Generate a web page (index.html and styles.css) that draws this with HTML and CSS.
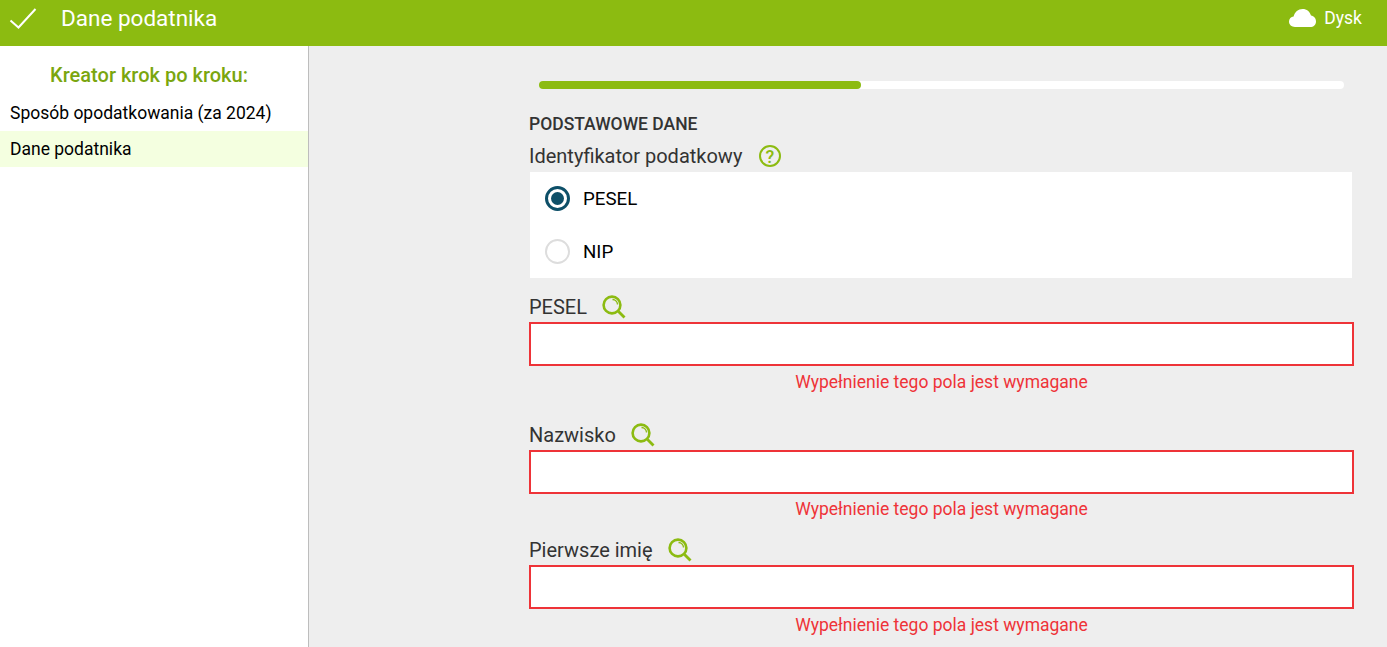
FILE: index.html
```html
<!DOCTYPE html>
<html lang="pl">
<head>
<meta charset="utf-8">
<title>Dane podatnika</title>
<link rel="stylesheet" href="styles.css">
</head>
<body>
<header class="topbar">
  <svg class="check" viewBox="0 0 28 21" width="28" height="21"><path d="M1.5 12.5 L9.5 19.5 L26.5 1" fill="none" stroke="#fff" stroke-width="2"/></svg>
  <h1 class="title">Dane podatnika</h1>
  <div class="drive">
    <svg class="cloud" viewBox="0 0 27 18" width="27" height="18"><path d="M6 18 C2.5 18 0 15.8 0 12.6 C0 9.8 2 7.8 4.6 7.5 C5.6 3 9.2 0 13.6 0 C17.8 0 21 2.6 22 6.6 C24.9 7 27 9.4 27 12.4 C27 15.8 24.6 18 21.2 18 Z" fill="#fff"/></svg>
    <span>Dysk</span>
  </div>
</header>
<div class="layout">
  <aside class="sidebar">
    <h2 class="side-title">Kreator krok po kroku:</h2>
    <ul class="steps">
      <li class="step">Sposób opodatkowania (za 2024)</li>
      <li class="step step-active">Dane podatnika</li>
    </ul>
  </aside>
  <main class="content">
    <form class="form">
      <div class="progress"><div class="progress-fill"></div></div>
      <h3 class="section">PODSTAWOWE DANE</h3>
      <div class="label label-id">
        <span>Identyfikator podatkowy</span>
        <svg class="icon-help" viewBox="0 0 24 24" width="24" height="24"><circle cx="12" cy="12" r="10" fill="none" stroke="#8cbb11" stroke-width="2"/><text x="12" y="18.5" text-anchor="middle" class="help-mark">?</text></svg>
      </div>
      <div class="radios">
        <div class="radio-row"><span class="radio radio-on"></span><span>PESEL</span></div>
        <div class="radio-row"><span class="radio"></span><span>NIP</span></div>
      </div>
      <div class="label label-search label-pesel">
        <span>PESEL</span>
        <svg class="icon-search" viewBox="0 0 24 24" width="24" height="24"><circle cx="10" cy="10" r="8.4" fill="none" stroke="#8cbb11" stroke-width="2.6"/><path d="M16.5 16.5 L22.5 22.5" stroke="#8cbb11" stroke-width="2.8" fill="none"/><path d="M10.5 4.5 A5.2 5.2 0 0 1 15.5 9.5" stroke="#8cbb11" stroke-width="1.3" fill="none"/></svg>
      </div>
      <div class="input"></div>
      <p class="error">Wypełnienie tego pola jest wymagane</p>
      <div class="label label-search label-name">
        <span>Nazwisko</span>
        <svg class="icon-search" viewBox="0 0 24 24" width="24" height="24"><circle cx="10" cy="10" r="8.4" fill="none" stroke="#8cbb11" stroke-width="2.6"/><path d="M16.5 16.5 L22.5 22.5" stroke="#8cbb11" stroke-width="2.8" fill="none"/><path d="M10.5 4.5 A5.2 5.2 0 0 1 15.5 9.5" stroke="#8cbb11" stroke-width="1.3" fill="none"/></svg>
      </div>
      <div class="input"></div>
      <p class="error error-tight">Wypełnienie tego pola jest wymagane</p>
      <div class="label label-search label-first">
        <span>Pierwsze imię</span>
        <svg class="icon-search" viewBox="0 0 24 24" width="24" height="24"><circle cx="10" cy="10" r="8.4" fill="none" stroke="#8cbb11" stroke-width="2.6"/><path d="M16.5 16.5 L22.5 22.5" stroke="#8cbb11" stroke-width="2.8" fill="none"/><path d="M10.5 4.5 A5.2 5.2 0 0 1 15.5 9.5" stroke="#8cbb11" stroke-width="1.3" fill="none"/></svg>
      </div>
      <div class="input"></div>
      <p class="error">Wypełnienie tego pola jest wymagane</p>
    </form>
  </main>
</div>
</body>
</html>
```
FILE: styles.css
```css
* { box-sizing: border-box; }
html, body { height: 100%; }
body {
  margin: 0;
  overflow: hidden;
  font-family: Roboto, "Liberation Sans", sans-serif;
  color: #333;
  display: flex;
  flex-direction: column;
}
.topbar {
  height: 46px;
  flex: none;
  background: #8cbb11;
  color: #fff;
  display: flex;
  align-items: flex-start;
  padding: 8px 25px 0 9px;
}
.check { flex: none; }
.title {
  margin: -5px 0 0 24px;
  font-size: 22.5px;
  font-weight: 400;
  line-height: 30px;
}
.drive {
  margin-left: auto;
  display: flex;
  align-items: center;
  gap: 8px;
  font-size: 17.5px;
  line-height: 20px;
}
.layout { flex: 1; display: flex; min-height: 0; }
.sidebar {
  width: 309px;
  flex: none;
  background: #fff;
  border-right: 1px solid #bdbdbd;
}
.side-title {
  margin: 17px 0 0;
  font-size: 20px;
  line-height: 24px;
  font-weight: 500;
  color: #7aa60f;
  text-align: center;
  padding-right: 10px;
}
.steps { list-style: none; margin: 8px 0 0; padding: 0; }
.step {
  height: 36px;
  line-height: 36px;
  padding-left: 10px;
  font-size: 17.5px;
  color: #000;
}
.step-active { background: #f4ffe0; }
.content {
  flex: 1;
  background: #eee;
  padding-left: 220px;
  overflow: hidden;
}
.form { width: 825px; }
.progress {
  margin: 35px 10px 0;
  height: 8px;
  border-radius: 4px;
  background: #fff;
}
.progress-fill {
  width: 40%;
  height: 100%;
  border-radius: 4px;
  background: #8cbb11;
}
.section {
  margin: 25px 0 0;
  font-size: 17.5px;
  line-height: 21px;
  font-weight: 500;
  color: #333;
}
.label {
  display: flex;
  align-items: center;
  gap: 16px;
  font-size: 20px;
  line-height: 28px;
  color: #333;
}
.label-id { margin-top: 7px; height: 27px; }
.label-search { height: 30px; gap: 15px; }
.label-pesel { margin-top: 14px; }
.label-name { margin-top: 26px; }
.label-first { margin-top: 14px; }
.help-mark {
  font-family: Roboto, sans-serif;
  font-size: 18px;
  font-weight: 500;
  fill: #8cbb11;
}
.radios {
  background: #fff;
  height: 106px;
  margin: 3px 0 0 1px;
  width: 822px;
}
.radio-row {
  height: 53px;
  display: flex;
  align-items: center;
  gap: 13px;
  padding-left: 15px;
  font-size: 18.7px;
  color: #000;
}
.radio {
  width: 25px;
  height: 25px;
  border-radius: 50%;
  border: 2px solid #ddd;
  background: #fff;
  display: flex;
  align-items: center;
  justify-content: center;
}
.radio-on { border: 3px solid #0d4f68; }
.radio-on::after {
  content: "";
  width: 13px;
  height: 13px;
  border-radius: 50%;
  background: #0d4f68;
}
.input {
  height: 44px;
  background: #fff;
  border: 2px solid #ee3338;
}
.error {
  margin: 4px 0 0;
  font-size: 17.5px;
  line-height: 24px;
  color: #ee3338;
  text-align: center;
}
.error-tight { margin-top: 3px; }
```
